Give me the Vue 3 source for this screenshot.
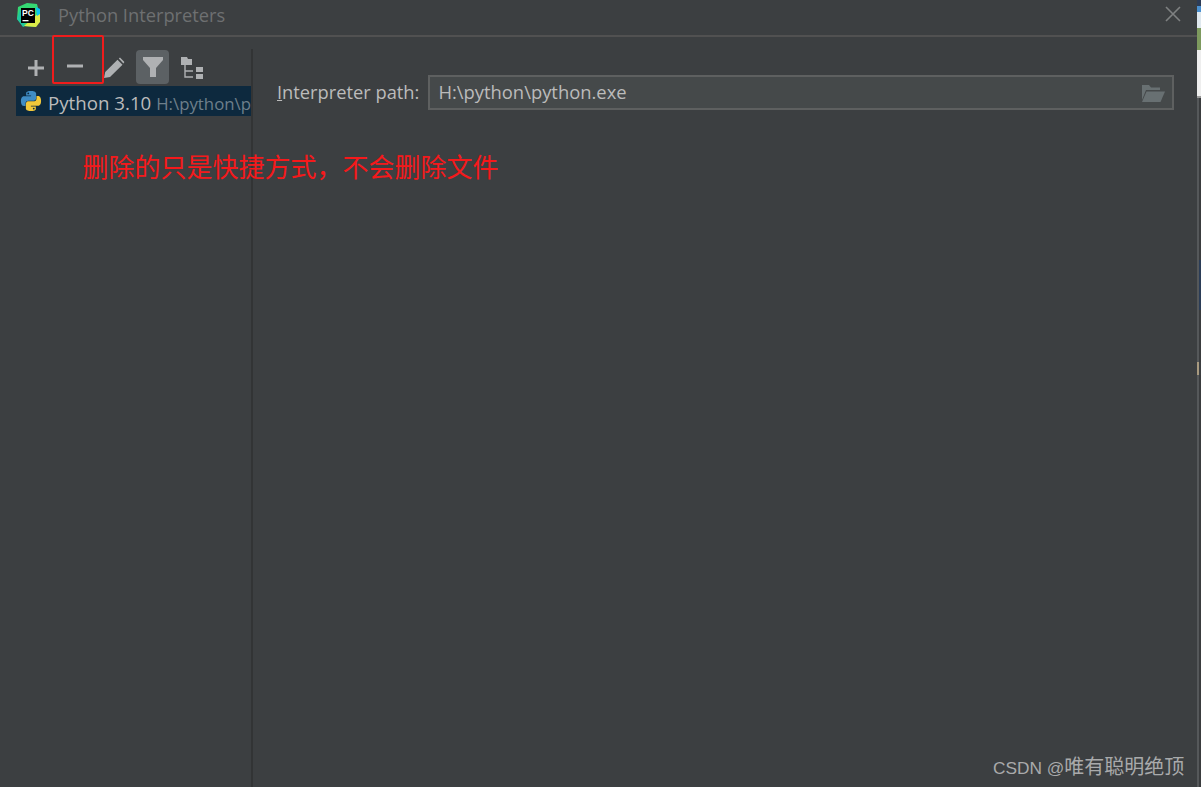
<script setup>
const stripParts = ['navy', 'sky', 'pale', 'green', 'white', 'grey', 'dark', 'dark2', 'blue', 'dark3', 'beige', 'dark4']
</script>

<template>
  <div class="window">
    <div class="dialog">
      <header class="titlebar">
        <svg class="logo" width="26" height="26" viewBox="0 0 26 26">
          <polygon points="3,5 12,1 22,2 25,14 21,25 8,24 2,17" fill="#35d873" />
          <polygon points="2,17 5,7 10,24 8,25" fill="#1fc7a0" />
          <polygon points="9,24 25,10 25,20 21,25" fill="#dcec48" />
          <polygon points="21,5 25,7 25,12 22,14" fill="#07c3f2" />
          <rect x="6" y="6" width="14" height="15" fill="#000" />
          <text x="7" y="14" class="logo-text">PC</text>
          <rect x="7.500" y="18" width="6" height="1.300" fill="#fff" />
        </svg>
        <span class="title">Python Interpreters</span>
        <svg class="close" width="16" height="16" viewBox="0 0 16 16">
          <path d="M1 1 15 15M15 1 1 15" stroke="#7f8182" stroke-width="1.600" fill="none" />
        </svg>
      </header>

      <div class="body">
        <aside class="side">
          <div class="toolbar">
            <span class="tool">
              <svg width="18" height="18" viewBox="0 0 18 18"><path d="M9 1v16M1 9h16" stroke="#afb1b3" stroke-width="3" fill="none" /></svg>
            </span>
            <span class="tool tool-minus">
              <svg width="18" height="18" viewBox="0 0 18 18"><path d="M1 9h16" stroke="#afb1b3" stroke-width="3" fill="none" /></svg>
            </span>
            <span class="tool">
              <svg width="22" height="22" viewBox="0 0 22 22"><path d="M1 21l1.200-6L14.500 2.800l5 5L7 20zM15.800 1.500 17 .6l4.400 4.400-1 1.500z" fill="#afb1b3" /></svg>
            </span>
            <span class="tool tool-on">
              <svg width="22" height="22" viewBox="0 0 22 22"><path d="M1 1h20v3l-7 8v9H8v-9L1 4z" fill="#afb1b3" /></svg>
            </span>
            <span class="tool">
              <svg width="24" height="24" viewBox="0 0 24 24" fill="#afb1b3"><path d="M1 1h6l1 2h4v6H1z" /><path d="M5 9v12h8M5 15h8" stroke="#afb1b3" stroke-width="1.400" fill="none" /><rect x="16" y="11" width="7" height="5" /><rect x="16" y="18" width="7" height="5" /></svg>
            </span>
          </div>
          <div class="item">
            <svg class="py" width="22" height="22" viewBox="0 0 24 24">
              <path d="M12 1C6.400 1 6.700 3.400 6.700 3.400V6h5.400v.8H4.600S1 6.400 1 12s3.200 5.400 3.200 5.400H6v-2.600s-.1-3.200 3.200-3.200h5.400s3 0 3-3V4s.5-3-5.600-3zM9 2.700a1 1 0 1 1 0 2 1 1 0 0 1 0-2z" fill="#3f8cc4" />
              <path d="M12 23c5.600 0 5.300-2.400 5.300-2.400V18h-5.400v-.8h7.500S23 17.600 23 12s-3.200-5.400-3.200-5.400H18v2.600s.1 3.200-3.200 3.200H9.400s-3 0-3 3V20s-.5 3 5.600 3zm3-1.700a1 1 0 1 1 0-2 1 1 0 0 1 0 2z" fill="#f2c83a" />
            </svg>
            <span class="item-name">Python 3.10</span>
            <span class="item-path">H:\python\p</span>
          </div>
        </aside>

        <main class="main">
          <label class="label"><span class="mnemonic">I</span>nterpreter path:</label>
          <div class="field">
            <span class="field-text">H:\python\python.exe</span>
            <svg width="24" height="18" viewBox="0 0 24 18" fill="#687072">
              <path d="M1 16V1h7l2 2.500h9V6H5z" />
              <path d="M5.500 7.500H24L19.500 18H1z" />
            </svg>
          </div>
        </main>
      </div>

      <div class="marker"></div>
      <p class="note">删除的只是快捷方式，不会删除文件</p>
      <p class="watermark"><span class="mark-latin">CSDN @</span>唯有聪明绝顶</p>
    </div>

    <div class="strip">
      <div v-for="part in stripParts" :key="part" :class="part"></div>
    </div>
  </div>
</template>

<style scoped>
.window {
  display: flex;
  height: 787px;
  width: 1201px;
  overflow: hidden;
  background: #3c3f41;
  font-family: "Open Sans", "Noto Sans CJK SC", sans-serif;
}
.dialog {
  position: relative;
  flex: 0 0 1197px;
  display: flex;
  flex-direction: column;
  background: #3c3f41;
}
.titlebar {
  flex: 0 0 37px;
  box-sizing: border-box;
  display: flex;
  align-items: flex-start;
  padding: 2px 16px 0 15px;
  border-bottom: 2px solid #515151;
}
.logo-text {
  font: 700 8.500px "Liberation Sans", sans-serif;
  fill: #fff;
}
.title {
  margin-left: 17px;
  font-size: 18.300px;
  line-height: 26px;
  color: #6e7071;
}
.close {
  margin-left: auto;
  margin-top: 4px;
}
.body {
  flex: 1;
  display: flex;
  margin-top: 12px;
  min-height: 0;
}
.side {
  flex: 0 0 253px;
  box-sizing: border-box;
  padding-left: 16px;
  border-right: 2px solid #323435;
  overflow: hidden;
}
.toolbar {
  height: 37px;
  display: flex;
}
.tool {
  flex: 0 0 39px;
  display: flex;
  align-items: center;
  justify-content: center;
}
.tool-minus svg {
  margin-bottom: 4px;
}
.tool-on {
  flex-basis: 33px;
  height: 34px;
  margin: 1px 3px 0;
  background: #5c6164;
  border-radius: 4px;
}
.item {
  height: 30px;
  display: flex;
  align-items: center;
  white-space: nowrap;
  overflow: hidden;
  background: #0d293e;
  padding-left: 4px;
}
.py {
  flex: none;
}
.item-name {
  margin: 3px 0 0 6px;
  font-size: 18.700px;
  color: #bbbbbb;
}
.item-path {
  margin: 4px 0 0 5px;
  font-size: 16.800px;
  color: #6e7f8b;
}
.main {
  flex: 1;
  display: flex;
  align-items: flex-start;
  padding: 26px 23px 0 24px;
}
.label {
  font-size: 18.300px;
  line-height: 33px;
  color: #bbbbbb;
  white-space: nowrap;
}
.mnemonic {
  text-decoration: underline;
}
.field {
  flex: 1;
  box-sizing: border-box;
  height: 35px;
  margin-left: 9px;
  display: flex;
  align-items: center;
  justify-content: space-between;
  padding: 0 7px 0 8px;
  border: 2px solid #5e6060;
  background: #45494a;
  font-size: 18.400px;
  color: #bbbbbb;
}
.field-text {
  margin-bottom: 2px;
}
.marker {
  position: absolute;
  left: 52px;
  top: 35px;
  width: 52px;
  height: 49px;
  box-sizing: border-box;
  border: 2px solid #f01c1c;
  border-radius: 2px;
}
.note {
  position: absolute;
  left: 82.500px;
  top: 148px;
  margin: 0;
  font-size: 26px;
  line-height: 36px;
  color: #f5191b;
  white-space: nowrap;
  font-family: "Noto Sans CJK SC", sans-serif;
}
.watermark {
  position: absolute;
  left: 993px;
  top: 753px;
  margin: 0;
  font-size: 20px;
  line-height: 28px;
  color: #a9aaab;
  white-space: nowrap;
  font-family: "Liberation Sans", "Noto Sans CJK SC", sans-serif;
}
.mark-latin {
  font-size: 17.300px;
}
.strip {
  flex: 1;
  display: flex;
  flex-direction: column;
}
.navy { height: 6px; background: #2c3b55; }
.sky { height: 6px; background: #4a90d0; }
.pale { height: 16px; background: #dfe8ee; }
.green { height: 22px; background: #7d9a5e; }
.white { height: 46px; background: #eeeeee; }
.grey { height: 2px; background: #9a9a9a; }
.dark, .dark2, .dark3, .dark4 { border-left: 2px solid #55585a; background: #3a3c3e; }
.dark { height: 110px; }
.dark2 { height: 52px; }
.blue { height: 50px; border-left: 2px solid #55585a; background: #2b3d57; }
.dark3 { height: 52px; }
.beige { height: 13px; width: 2px; background: #a89a80; }
.dark4 { flex: 1; }
</style>
